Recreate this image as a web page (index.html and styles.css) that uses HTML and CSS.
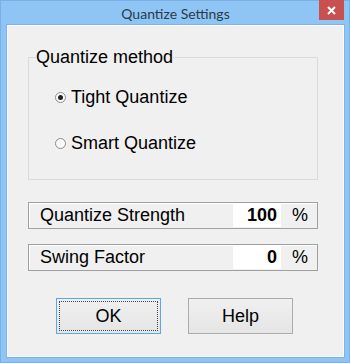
FILE: index.html
```html
<!DOCTYPE html>
<html lang="en">
<head>
    <meta charset="UTF-8">
    <meta name="viewport" content="width=device-width, initial-scale=1.0">
    <title>Quantize Settings</title>
    <link rel="stylesheet" href="styles.css">
</head>
<body>

    <div class="window">
        <!-- Title bar -->
        <div class="titlebar">
            <span class="title">Quantize Settings</span>
            <button class="close" type="button" aria-label="Close">
                <svg width="9" height="9" viewBox="0 0 9 9">
                    <path d="M1 1 L8 8 M8 1 L1 8" stroke="#fff" stroke-width="2" fill="none"/>
                </svg>
            </button>
        </div>

        <form class="client" id="quantizeForm">
            <!-- Method -->
            <fieldset class="group">
                <legend>Quantize method</legend>
                <label class="radio-row">
                    <span class="radio checked"></span>
                    <span>Tight Quantize</span>
                </label>
                <label class="radio-row">
                    <span class="radio"></span>
                    <span>Smart Quantize</span>
                </label>
            </fieldset>

            <!-- Values -->
            <div class="value-box">
                <span class="value-label">Quantize Strength</span>
                <span class="value-field">100</span>
                <span class="unit">%</span>
            </div>
            <div class="value-box swing">
                <span class="value-label">Swing Factor</span>
                <span class="value-field">0</span>
                <span class="unit">%</span>
            </div>

            <div class="buttons">
                <button type="submit" class="btn default"><span>OK</span></button>
                <button type="button" class="btn">Help</button>
            </div>
        </form>
    </div>

</body>
</html>
```

FILE: styles.css
```css
body { margin: 0; font-family: "Liberation Sans", Arial, sans-serif; }
.window { width: 350px; height: 363px; box-sizing: border-box; border: 1px solid #78b1e8; background: #8fc5f5; padding: 0 5px 5px 6px; }
.titlebar { height: 24px; position: relative; display: flex; justify-content: center; }
.title { font-family: Lato, sans-serif; font-size: 14px; color: #2b3a4a; line-height: 25px; }
.close { position: absolute; right: 0; top: -1px; width: 25px; height: 20px; border: none; padding: 0; background: #c75050; display: flex; align-items: center; justify-content: center; }
.client { height: 332px; box-sizing: border-box; background: #f0f0f0; border: 1px solid #fbfbfb; box-shadow: 0 0 0 1px #7db3e6; padding-top: 21px; font-size: 18px; color: #000; }
.group { width: 290px; box-sizing: border-box; margin: 0 0 0 20px; border: 1px solid #dadada; padding: 19px 0 25px 7px; }
.group legend { padding: 0; line-height: 21px; }
.radio-row { display: flex; align-items: center; height: 21px; line-height: 21px; padding-left: 19px; }
.radio-row + .radio-row { margin-top: 25px; }
.radio { width: 9px; height: 9px; border: 1px solid #8c8c8c; border-radius: 50%; background: #fafafa; margin-right: 5px; position: relative; }
.radio.checked::after { content: ""; position: absolute; left: 2px; top: 2px; width: 5px; height: 5px; border-radius: 50%; background: #222; }
.value-box { width: 290px; height: 27px; box-sizing: border-box; margin: 22px 0 0 20px; border: 1px solid #a0a0a0; box-shadow: inset 1px 1px #fff; display: flex; align-items: center; padding: 0 9px 0 11px; line-height: 21px; }
.value-box.swing { margin-top: 15px; }
.value-label { flex: 1; }
.value-field { width: 48px; height: 23px; box-sizing: border-box; background: #fff; font-weight: bold; text-align: right; padding-right: 4px; line-height: 23px; }
.unit { margin-left: 11px; }
.buttons { display: flex; gap: 27px; margin: 27px 0 0 48px; }
.btn { width: 105px; height: 36px; font-family: "Liberation Sans", Arial, sans-serif; font-size: 18px; color: #000; border: 1px solid #acacac; background: linear-gradient(#f0f0f0, #e5e5e5); padding: 0; }
.btn.default { border-color: #5ea6ea; outline: 1px dotted #444; outline-offset: -4px; }
```
